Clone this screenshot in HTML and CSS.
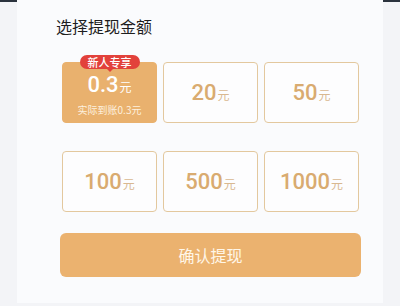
FILE: index.html
```html
<!DOCTYPE html>
<html lang="zh">
<head>
<meta charset="utf-8">
<link rel="stylesheet" href="styles.css">
</head>
<body>
<div class="page">
  <div class="gutter"><div class="strip"></div></div>
  <main class="panel">
    <h2 class="title">选择提现金额</h2>
    <div class="grid">
      <div class="opt selected">
        <span class="badge">新人专享</span>
        <div class="amt"><span class="num">0.3</span><span class="unit">元</span></div>
        <div class="sub">实际到账0.3元</div>
      </div>
      <div class="opt"><div class="amt"><span class="num">20</span><span class="unit">元</span></div></div>
      <div class="opt"><div class="amt"><span class="num">50</span><span class="unit">元</span></div></div>
      <div class="opt"><div class="amt"><span class="num">100</span><span class="unit">元</span></div></div>
      <div class="opt"><div class="amt"><span class="num">500</span><span class="unit">元</span></div></div>
      <div class="opt"><div class="amt"><span class="num">1000</span><span class="unit">元</span></div></div>
    </div>
    <button class="confirm">确认提现</button>
  </main>
  <div class="gutter"><div class="strip"></div></div>
</div>
</body>
</html>
```
FILE: styles.css
```css
html, body {
  margin: 0;
  padding: 0;
  background: #f3f4f7;
  font-family: "Noto Sans CJK SC", "Noto Sans", sans-serif;
}
.page {
  display: flex;
  width: 400px;
  height: 306px;
}
.gutter {
  width: 17px;
  flex: none;
}
.strip {
  height: 2px;
  background: #2a323d;
}
.panel {
  width: 366px;
  height: 303px;
  background: #fafbfd;
  box-sizing: border-box;
  padding: 15px 0 0 39px;
}
.title {
  margin: 0;
  font-size: 16px;
  line-height: 22px;
  font-weight: 400;
  color: #1e1e1e;
}
.grid {
  margin: 25px 0 0 6px;
  display: grid;
  grid-template-columns: repeat(3, 95px);
  grid-auto-rows: 61px;
  column-gap: 6px;
  row-gap: 28px;
}
.opt {
  position: relative;
  box-sizing: border-box;
  border: 1px solid #e3c89e;
  border-radius: 4px;
  background: #fdfdfe;
  display: flex;
  flex-direction: column;
  align-items: center;
  justify-content: center;
  color: #d9ab70;
}
.amt {
  display: flex;
  align-items: baseline;
  font-family: Roboto, "Noto Sans", sans-serif;
}
.num {
  font-size: 22px;
  font-weight: 500;
  line-height: 24px;
}
.unit {
  font-family: "Noto Sans CJK SC", sans-serif;
  font-size: 12px;
  margin-left: 1px;
  color: #d9b890;
}
.selected {
  background: #e9b16e;
  border-color: #e9b16e;
  color: #fff;
  justify-content: flex-start;
  padding-top: 10px;
}
.selected .unit {
  color: #fff;
}
.sub {
  margin-top: 7px;
  font-size: 10px;
  line-height: 12px;
  color: #fdf0de;
}
.badge {
  position: absolute;
  top: -8px;
  left: 50%;
  transform: translateX(-50%);
  width: 60px;
  height: 14px;
  border-radius: 7px;
  background: #e2413b;
  color: #fff;
  font-size: 11px;
  line-height: 14px;
  text-align: center;
  font-weight: 500;
}
.badge::after {
  content: "";
  position: absolute;
  left: 50%;
  bottom: -3px;
  margin-left: -3px;
  border-left: 3px solid transparent;
  border-right: 3px solid transparent;
  border-top: 3px solid #e2413b;
}
.confirm {
  display: block;
  margin: 21px 0 0 4px;
  width: 301px;
  height: 44px;
  border: none;
  border-radius: 6px;
  background: #ebb26f;
  color: #fff6e8;
  font-family: "Noto Sans CJK SC", sans-serif;
  font-size: 16px;
  padding: 0;
}
```
